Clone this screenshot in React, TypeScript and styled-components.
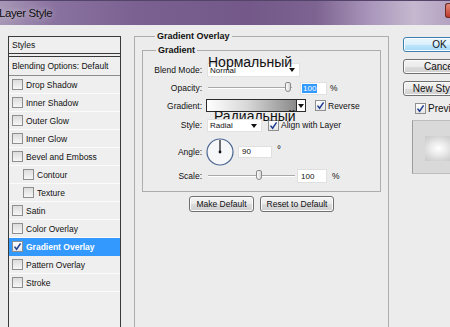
import React from "react";
import styled, { createGlobalStyle } from "styled-components";

const GlobalStyle = createGlobalStyle`
  html, body {
    margin: 0;
    padding: 0;
    background: #ececec;
  }

  body {
    font-family: "Liberation Sans", Arial, sans-serif;
    font-size: 8.5px;
    color: #111;
  }
`;

const effects = [
  { name: "Drop Shadow" },
  { name: "Inner Shadow" },
  { name: "Outer Glow" },
  { name: "Inner Glow" },
  { name: "Bevel and Emboss" },
  { name: "Contour", indent: true },
  { name: "Texture", indent: true },
  { name: "Satin" },
  { name: "Color Overlay" },
  { name: "Gradient Overlay", selected: true },
  { name: "Pattern Overlay" },
  { name: "Stroke" },
];

const CheckMark = () => (
  <svg width='9' height='9' viewBox='0 0 9 9'>
    <path
      d='M1.5 4.6 L3.6 7.2 L7.6 1.4'
      fill='none'
      stroke='#1d3b8f'
      strokeWidth='1.5'
    />
  </svg>
);

const Check = ({ checked }: { checked?: boolean }) => (
  <CheckBox $checked={checked}>{checked && <CheckMark />}</CheckBox>
);

const Slider = ({
  width,
  value,
  min,
  max,
}: {
  width: number;
  value: number;
  min: number;
  max: number;
}) => {
  const left = ((value - min) / (max - min)) * (width - 7);
  return (
    <Track $w={width}>
      <Thumb style={{ left }} />
    </Track>
  );
};

const AngleDial = () => (
  <Dial width='28' height='28' viewBox='0 0 28 28'>
    <circle cx='14' cy='14' r='13' fill='#f6f7f9' stroke='#4a6590' strokeWidth='1.2' />
    <line x1='14' y1='14' x2='14' y2='2' stroke='#111' strokeWidth='1.2' />
    <circle cx='14' cy='14' r='1.4' fill='#111' />
  </Dial>
);

const App = () => {
  return (
    <Window>
      <GlobalStyle />
      <TitleBar>
        <Title>Layer Style</Title>
        <CloseButton />
      </TitleBar>

      <Body>
        <StylesPanel>
          <PanelHeader>Styles</PanelHeader>
          <BlendingRow>Blending Options: Default</BlendingRow>
          {effects.map((fx) => (
            <EffectRow
              key={fx.name}
              $indent={fx.indent}
              $selected={fx.selected}
            >
              <Check checked={fx.selected} />
              <span>{fx.name}</span>
            </EffectRow>
          ))}
        </StylesPanel>

        <Main>
          <OuterGroup>
            <Legend>Gradient Overlay</Legend>
            <InnerGroup>
              <Legend>Gradient</Legend>

              <Row $h={19}>
                <Label>Blend Mode:</Label>
                <Select $w={93} $h={14}>
                  Normal
                  <Arrow />
                  <Caption style={{ top: -9, left: 0 }}>Нормальный</Caption>
                </Select>
              </Row>

              <Row $h={18}>
                <Label>Opacity:</Label>
                <SliderSlot>
                  <Slider width={84} value={100} min={0} max={100} />
                </SliderSlot>
                <NumberBox $w={27} $h={13} $ml={8}>
                  <Selection>100</Selection>
                </NumberBox>
                <Unit>%</Unit>
              </Row>

              <Row $h={17}>
                <Label>Gradient:</Label>
                <GradientPicker>
                  <GradientSwatch />
                  <GradientArrow>
                    <Arrow />
                  </GradientArrow>
                  <Caption style={{ top: 9, left: 7 }}>Радиальный</Caption>
                </GradientPicker>
                <CheckLabel $ml={9}>
                  <Check checked />
                  Reverse
                </CheckLabel>
              </Row>

              <Row $h={22}>
                <Label>Style:</Label>
                <Select $w={55} $h={13}>
                  Radial
                  <Arrow />
                </Select>
                <CheckLabel $ml={6}>
                  <Check checked />
                  Align with Layer
                </CheckLabel>
              </Row>

              <Row $h={31}>
                <Label>Angle:</Label>
                <AngleDial />
                <NumberBox $w={34} $h={12} $ml={4}>
                  90
                </NumberBox>
                <Degree>°</Degree>
              </Row>

              <Row $h={18}>
                <Label>Scale:</Label>
                <SliderSlot>
                  <Slider width={87} value={100} min={10} max={160} />
                </SliderSlot>
                <NumberBox $w={30} $h={14} $ml={2}>
                  100
                </NumberBox>
                <Unit $ml={5}>%</Unit>
              </Row>
            </InnerGroup>

            <ButtonRow>
              <PushButton $w={65}>Make Default</PushButton>
              <PushButton $w={74}>Reset to Default</PushButton>
            </ButtonRow>
          </OuterGroup>
        </Main>

        <SideColumn>
          <DialogButton $primary>OK</DialogButton>
          <DialogButton>Cancel</DialogButton>
          <DialogButton>New Style...</DialogButton>
          <PreviewCheck>
            <Check checked />
            Preview
          </PreviewCheck>
          <PreviewBox>
            <PreviewSwatch />
          </PreviewBox>
        </SideColumn>
      </Body>
    </Window>
  );
};

const Window = styled.div`
  width: 450px;
  height: 327px;
  overflow: hidden;
  background: #ececec;
`;

const TitleBar = styled.div`
  height: 25px;
  display: flex;
  align-items: center;
  justify-content: space-between;
  border-top: 1px solid #54446a;
  box-sizing: border-box;
  background: linear-gradient(
    90deg,
    #a797b5 0%,
    #8a72a0 12%,
    #7a6191 30%,
    #735889 55%,
    #7c6390 70%,
    #a995ba 82%,
    #c5b8cf 92%,
    #b3a2c1 100%
  );
`;

const Title = styled.span`
  margin-left: -1px;
  font-size: 11.5px;
  letter-spacing: -0.4px;
  color: #111;
  text-shadow: 0 0 6px rgba(255, 255, 255, 0.6);
`;

const CloseButton = styled.div`
  width: 4px;
  height: 13px;
  margin-bottom: 6px;
  border-radius: 3px 0 0 3px;
  background: linear-gradient(#e08a7a, #c0392b);
  border: 1px solid #6b2a24;
  border-right: none;
`;

const Body = styled.div`
  display: flex;
  align-items: flex-start;

  & > * {
    flex-shrink: 0;
  }
`;

const StylesPanel = styled.div`
  margin: 11px 0 0 8px;
  width: 113px;
  height: 310px;
  box-sizing: border-box;
  border: 1px solid #3a3a3a;
  background: #efefef;
`;

const PanelHeader = styled.div`
  height: 16px;
  line-height: 16px;
  padding-left: 3px;
  border-bottom: 1px solid #3a3a3a;
  margin-bottom: 2px;
`;

const BlendingRow = styled.div`
  height: 18px;
  line-height: 18px;
  padding-left: 3px;
  border-top: 1px solid #3a3a3a;
  border-bottom: 1px solid #8c8c8c;
`;

const EffectRow = styled.div<{ $indent?: boolean; $selected?: boolean }>`
  display: flex;
  align-items: center;
  gap: 3px;
  height: 17px;
  padding-left: ${(p) => (p.$indent ? 14 : 3)}px;
  border-bottom: 1px solid ${(p) => (p.$selected ? "#3399ff" : "#fbfbfb")};
  background: ${(p) => (p.$selected ? "#3399ff" : "transparent")};
  color: ${(p) => (p.$selected ? "#fff" : "#111")};
  font-weight: ${(p) => (p.$selected ? "bold" : "normal")};
`;

const CheckBox = styled.span<{ $checked?: boolean }>`
  display: inline-flex;
  align-items: center;
  justify-content: center;
  width: 9px;
  height: 9px;
  flex-shrink: 0;
  border: 1px solid #8e8f8f;
  background: ${(p) =>
    p.$checked
      ? "linear-gradient(#ffffff, #e6e6e6)"
      : "linear-gradient(#dcdcdc, #f6f6f6)"};
`;

const Main = styled.div`
  margin: 6px 0 0 13px;
`;

const OuterGroup = styled.fieldset`
  width: 255px;
  height: 320px;
  margin: 0;
  padding: 3px 7px 0 7px;
  box-sizing: border-box;
  border: 1px solid #adadad;
`;

const Legend = styled.legend`
  margin-left: 13px;
  padding: 0 2px;
  font-weight: bold;
  font-size: 9px;
  line-height: 11px;
`;

const InnerGroup = styled.fieldset`
  position: relative;
  width: 239px;
  margin: 0;
  padding: 4px 0 6px 0;
  box-sizing: border-box;
  border: 1px solid #adadad;
`;

const Row = styled.div<{ $h: number }>`
  display: flex;
  align-items: center;
  height: ${(p) => p.$h}px;
`;

const Label = styled.span`
  width: 59px;
  margin-right: 5px;
  text-align: right;
  flex-shrink: 0;
`;

const Select = styled.div<{ $w: number; $h: number }>`
  position: relative;
  display: flex;
  align-items: center;
  justify-content: space-between;
  width: ${(p) => p.$w}px;
  height: ${(p) => p.$h}px;
  padding: 1px 4px 0 2px;
  box-sizing: border-box;
  background: #fff;
  border: 1px solid #e2e2e2;
  font-size: 8px;
`;

const Arrow = styled.span`
  width: 0;
  height: 0;
  border-left: 3.5px solid transparent;
  border-right: 3.5px solid transparent;
  border-top: 4px solid #111;
`;

const Caption = styled.span`
  position: absolute;
  white-space: nowrap;
  font-family: "Liberation Sans", Arial, sans-serif;
  font-size: 14px;
  line-height: 14px;
  color: #111;
  pointer-events: none;
`;

const SliderSlot = styled.div`
  margin-left: 1px;
  display: flex;
  align-items: center;
`;

const Track = styled.div<{ $w: number }>`
  position: relative;
  width: ${(p) => p.$w}px;
  height: 1px;
  background: #a9a9a9;
  border-bottom: 1px solid #fff;
`;

const Thumb = styled.span`
  position: absolute;
  top: -5px;
  width: 6px;
  height: 10px;
  border: 1px solid #8a8a8a;
  border-radius: 2px 2px 3px 3px;
  box-sizing: border-box;
  background: linear-gradient(90deg, #fdfdfd, #d6d6d6);
`;

const NumberBox = styled.div<{ $w: number; $h: number; $ml: number }>`
  display: flex;
  align-items: center;
  width: ${(p) => p.$w}px;
  height: ${(p) => p.$h}px;
  margin-left: ${(p) => p.$ml}px;
  padding-left: 3px;
  box-sizing: border-box;
  background: #fff;
  border: 1px solid #e0e0e0;
  font-size: 8px;
`;

const Selection = styled.span`
  background: #3399ff;
  color: #fff;
  padding: 0 1px;
  margin-left: -2px;
`;

const Unit = styled.span<{ $ml?: number }>`
  margin-left: ${(p) => p.$ml ?? 3}px;
`;

const Degree = styled.span`
  margin-left: 5px;
  align-self: flex-start;
  margin-top: 8px;
  font-size: 10px;
`;

const GradientPicker = styled.div`
  position: relative;
  display: flex;
  margin-left: -1px;
  height: 13px;
  width: 100px;
  box-sizing: border-box;
  border: 1px solid #2b2b2b;
`;

const GradientSwatch = styled.div`
  flex: 1;
  background: linear-gradient(90deg, #ffffff 0%, #d8d8d8 45%, #8a8a8a 100%);
  border-right: 1px solid #2b2b2b;
`;

const GradientArrow = styled.div`
  width: 8px;
  display: flex;
  align-items: center;
  justify-content: center;
  background: #fff;
`;

const CheckLabel = styled.span<{ $ml: number }>`
  display: flex;
  align-items: center;
  gap: 2px;
  margin-left: ${(p) => p.$ml}px;
`;

const Dial = styled.svg`
  margin-left: -1px;
`;

const ButtonRow = styled.div`
  display: flex;
  justify-content: center;
  gap: 6px;
  margin-top: 4px;
`;

const PushButton = styled.button<{ $w: number }>`
  width: ${(p) => p.$w}px;
  height: 16px;
  padding: 0;
  font-family: "Liberation Sans", Arial, sans-serif;
  font-size: 8.5px;
  color: #111;
  border: 1px solid #707070;
  border-radius: 3px;
  background: linear-gradient(#f4f4f4 0%, #ebebeb 50%, #dcdcdc 51%, #d0d0d0 100%);
  box-shadow: inset 0 0 0 1px #fbfbfb;
`;

const SideColumn = styled.div`
  margin: 12px 0 0 14px;
  width: 73px;
  display: flex;
  flex-direction: column;
`;

const DialogButton = styled.button<{ $primary?: boolean }>`
  width: 73px;
  height: 15px;
  margin-bottom: 7px;
  padding: 0;
  font-family: "Liberation Sans", Arial, sans-serif;
  font-size: 10px;
  color: #111;
  border-radius: 3px;
  border: 1px solid ${(p) => (p.$primary ? "#3c7fb1" : "#707070")};
  background: ${(p) =>
    p.$primary
      ? "linear-gradient(#eaf6fd 0%, #d9f0fc 50%, #bee6fd 51%, #a7d9f5 100%)"
      : "linear-gradient(#f2f2f2 0%, #ebebeb 50%, #dddddd 51%, #cfcfcf 100%)"};
  box-shadow: inset 0 0 0 1px #fcfcfc;
`;

const PreviewCheck = styled.div`
  display: flex;
  align-items: center;
  gap: 2px;
  height: 13px;
  margin: -1px 0 0 12px;
  font-size: 10px;
`;

const PreviewBox = styled.div`
  margin: 5px 0 0 9px;
  width: 60px;
  height: 54px;
  box-sizing: border-box;
  border: 1px solid #bdbdbd;
  border-left-color: #9c9c9c;
  background: #d9d9d9;
  padding: 15px 0 0 12px;
`;

const PreviewSwatch = styled.div`
  width: 30px;
  height: 25px;
  background: radial-gradient(
    ellipse at 45% 50%,
    #ffffff 0%,
    #ebebeb 35%,
    #d0d0d0 75%,
    #c8c8c8 100%
  );
`;

export default App;
